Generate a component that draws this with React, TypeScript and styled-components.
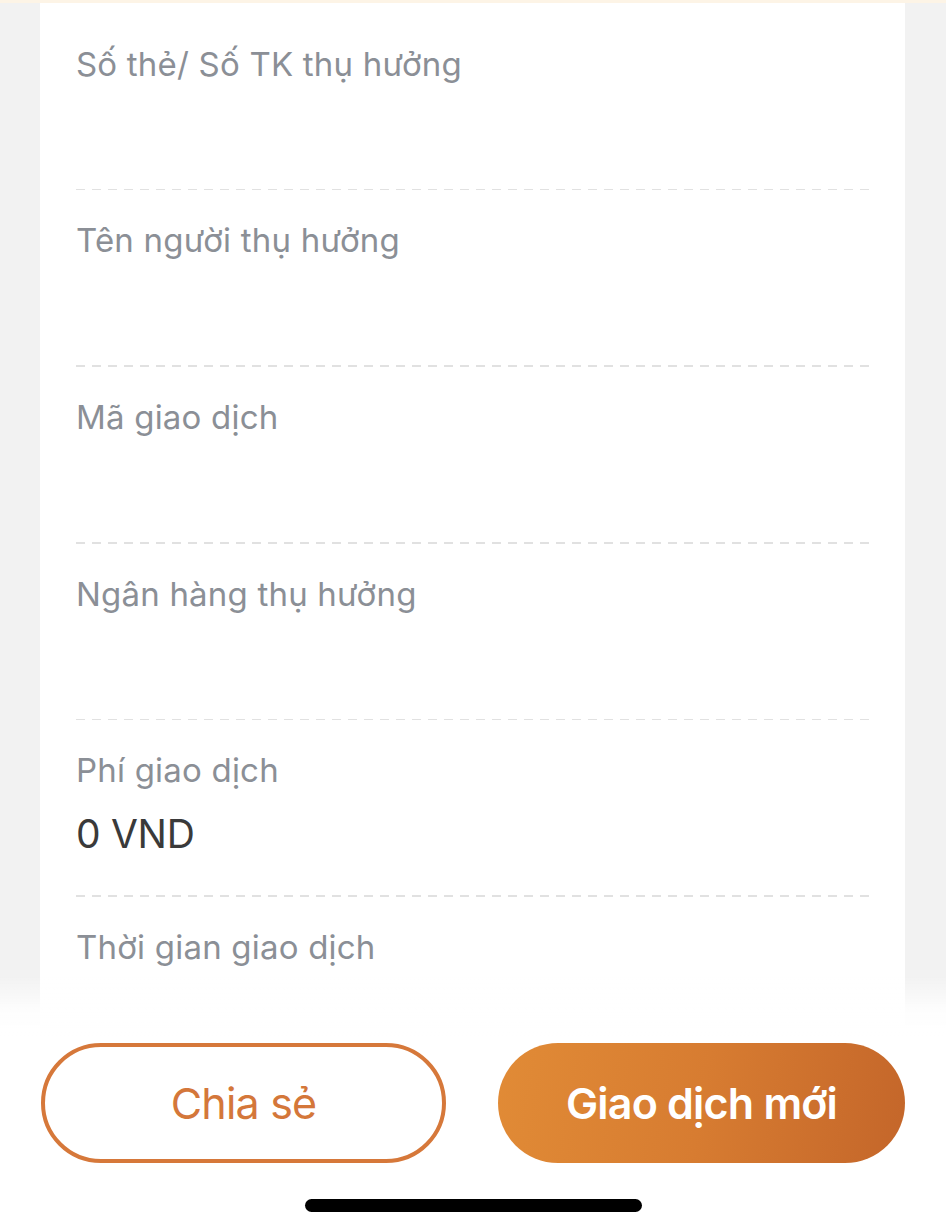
import React from "react";
import styled, { createGlobalStyle } from "styled-components";

const GlobalStyle = createGlobalStyle`
  html, body {
    margin: 0;
    padding: 0;
    background: #f2f2f2;
  }
  * { box-sizing: border-box; }
  body {
    font-family: Inter, "Noto Sans", "Liberation Sans", sans-serif;
    overflow: hidden;
  }
`;

const Page = styled.div`
  width: 946px;
  height: 1232px;
  display: flex;
  flex-direction: column;
  background: #f2f2f2;
  overflow: hidden;
`;

const TopTint = styled.div`
  height: 3px;
  flex: none;
  background: #fdf4e6;
`;

const Card = styled.div`
  margin: 0 41px 0 40px;
  background: #ffffff;
  padding: 10.5px 35px 300px 36px;
  display: flex;
  flex-direction: column;
  flex: 1;
`;

const Row = styled.div`
  display: flex;
  flex-direction: column;
  padding-top: 30px;
`;

const Label = styled.div`
  font-size: 33px;
  line-height: 40px;
  color: #8b8f96;
  letter-spacing: 0.2px;
  white-space: nowrap;
`;

const Value = styled.div`
  margin-top: 19px;
  font-size: 39px;
  line-height: 50px;
  height: 50px;
  color: #3a3a3a;
  letter-spacing: -0.3px;
`;

const Divider = styled.div`
  margin-top: 36.2px;
  height: 1.5px;
  background-image: linear-gradient(
    to right,
    #e1e1e1 0,
    #e1e1e1 9px,
    transparent 9px,
    transparent 16px
  );
  background-size: 16px 1.5px;
  background-repeat: repeat-x;
`;

const BottomBar = styled.div`
  position: fixed;
  left: 0;
  right: 0;
  bottom: 0;
  height: 257px;
  padding: 68px 41px 20px 41px;
  display: flex;
  flex-direction: column;
  align-items: center;
  background: linear-gradient(
    to bottom,
    rgba(255, 255, 255, 0) 0px,
    rgba(255, 255, 255, 0.85) 35px,
    #ffffff 62px
  );
`;

const Buttons = styled.div`
  width: 100%;
  display: grid;
  grid-template-columns: 405px 407px;
  justify-content: space-between;
`;

const Button = styled.button<{ $primary?: boolean }>`
  height: 120px;
  border-radius: 60px;
  font-family: Inter, "Noto Sans", "Liberation Sans", sans-serif;
  font-size: 43px;
  letter-spacing: -0.8px;
  display: flex;
  align-items: center;
  justify-content: center;
  padding: 0;
  cursor: pointer;
  border: ${(p) => (p.$primary ? "none" : "4px solid #d6783a")};
  color: ${(p) => (p.$primary ? "#ffffff" : "#d4773a")};
  font-weight: ${(p) => (p.$primary ? 600 : 400)};
  background: ${(p) =>
    p.$primary
      ? "linear-gradient(100deg, #e18b36 0%, #d77c31 50%, #c4662a 100%)"
      : "#ffffff"};
`;

const HomeIndicator = styled.div`
  margin-top: 36px;
  width: 337px;
  height: 13px;
  border-radius: 7px;
  background: #000000;
`;

const rows: { label: string; value?: string }[] = [
  { label: "Số thẻ/ Số TK thụ hưởng" },
  { label: "Tên người thụ hưởng" },
  { label: "Mã giao dịch" },
  { label: "Ngân hàng thụ hưởng" },
  { label: "Phí giao dịch", value: "0 VND" },
  { label: "Thời gian giao dịch" },
];

export default function App() {
  return (
    <>
      <GlobalStyle />
      <Page>
        <TopTint />
        <Card>
          {rows.map((r, i) => (
            <Row key={r.label}>
              <Label>{r.label}</Label>
              <Value>{r.value ?? ""}</Value>
              {i < rows.length - 1 && <Divider />}
            </Row>
          ))}
        </Card>
        <BottomBar>
          <Buttons>
            <Button>Chia sẻ</Button>
            <Button $primary>Giao dịch mới</Button>
          </Buttons>
          <HomeIndicator />
        </BottomBar>
      </Page>
    </>
  );
}
